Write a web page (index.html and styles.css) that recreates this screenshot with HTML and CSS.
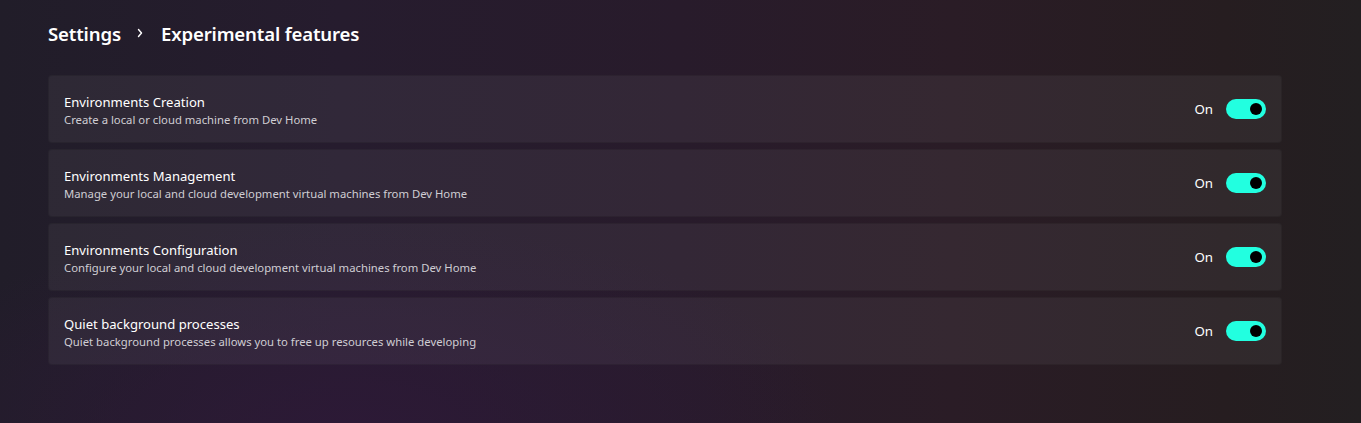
FILE: index.html
```html
<!DOCTYPE html>
<html>
<head>
<meta charset="utf-8">
<link rel="stylesheet" href="styles.css">
</head>
<body>
<div class="page">
  <div class="breadcrumb">
    <span class="crumb">Settings</span>
    <svg class="chev" width="8" height="10" viewBox="0 0 8 10"><path d="M2.5 1.5 L5.5 5 L2.5 8.5" fill="none" stroke="#ffffff" stroke-width="1.4" stroke-linecap="round" stroke-linejoin="round"/></svg>
    <span class="crumb">Experimental features</span>
  </div>
  <div class="list">
    <div class="card">
      <div class="text">
        <div class="title">Environments Creation</div>
        <div class="desc">Create a local or cloud machine from Dev Home</div>
      </div>
      <div class="state">On</div>
      <div class="toggle"><div class="knob"></div></div>
    </div>
    <div class="card">
      <div class="text">
        <div class="title">Environments Management</div>
        <div class="desc">Manage your local and cloud development virtual machines from Dev Home</div>
      </div>
      <div class="state">On</div>
      <div class="toggle"><div class="knob"></div></div>
    </div>
    <div class="card">
      <div class="text">
        <div class="title">Environments Configuration</div>
        <div class="desc">Configure your local and cloud development virtual machines from Dev Home</div>
      </div>
      <div class="state">On</div>
      <div class="toggle"><div class="knob"></div></div>
    </div>
    <div class="card">
      <div class="text">
        <div class="title">Quiet background processes</div>
        <div class="desc">Quiet background processes allows you to free up resources while developing</div>
      </div>
      <div class="state">On</div>
      <div class="toggle"><div class="knob"></div></div>
    </div>
  </div>
</div>
</body>
</html>
```
FILE: styles.css
```css
html, body {
  margin: 0;
  padding: 0;
  height: 100%;
}
body {
  font-family: "Noto Sans", "Open Sans", sans-serif;
  color: #ffffff;
  background:
    radial-gradient(ellipse 700px 300px at 350px 430px, rgba(45, 25, 55, 0.9), rgba(45, 25, 55, 0) 70%),
    linear-gradient(90deg, #211d29 0%, #261c2e 25%, #281b2b 50%, #2a1c26 70%, #261d20 90%, #231f21 100%);
  overflow: hidden;
}
.page {
  padding: 19px 79px 0 48px;
}
.breadcrumb {
  display: flex;
  align-items: center;
  height: 28px;
}
.crumb {
  font-size: 18.6px;
  font-weight: 600;
  letter-spacing: -0.15px;
}
.chev {
  margin: 0 17px 0 15px;
}
.list {
  margin-top: 28px;
  display: flex;
  flex-direction: column;
  gap: 6px;
}
.card {
  height: 68px;
  box-sizing: border-box;
  display: flex;
  align-items: center;
  padding: 2px 15px 0 15px;
  background: rgba(255, 255, 255, 0.055);
  border-radius: 4px;
  border: 1px solid rgba(0, 0, 0, 0.12);
}
.text {
  flex: 1;
  display: flex;
  flex-direction: column;
  gap: 1px;
}
.title {
  font-size: 13.1px;
  line-height: 18px;
  color: #ffffff;
}
.desc {
  font-size: 11.3px;
  line-height: 16px;
  color: #cfcdd3;
}
.state {
  font-size: 13.3px;
  margin-right: 13px;
  margin-bottom: 2px;
}
.toggle {
  width: 40px;
  height: 20px;
  margin-bottom: 2px;
  border-radius: 10px;
  background: #22ffe0;
  display: flex;
  align-items: center;
  justify-content: flex-end;
  padding-right: 4px;
  box-sizing: border-box;
}
.knob {
  width: 12px;
  height: 12px;
  border-radius: 50%;
  background: #000000;
}
```
